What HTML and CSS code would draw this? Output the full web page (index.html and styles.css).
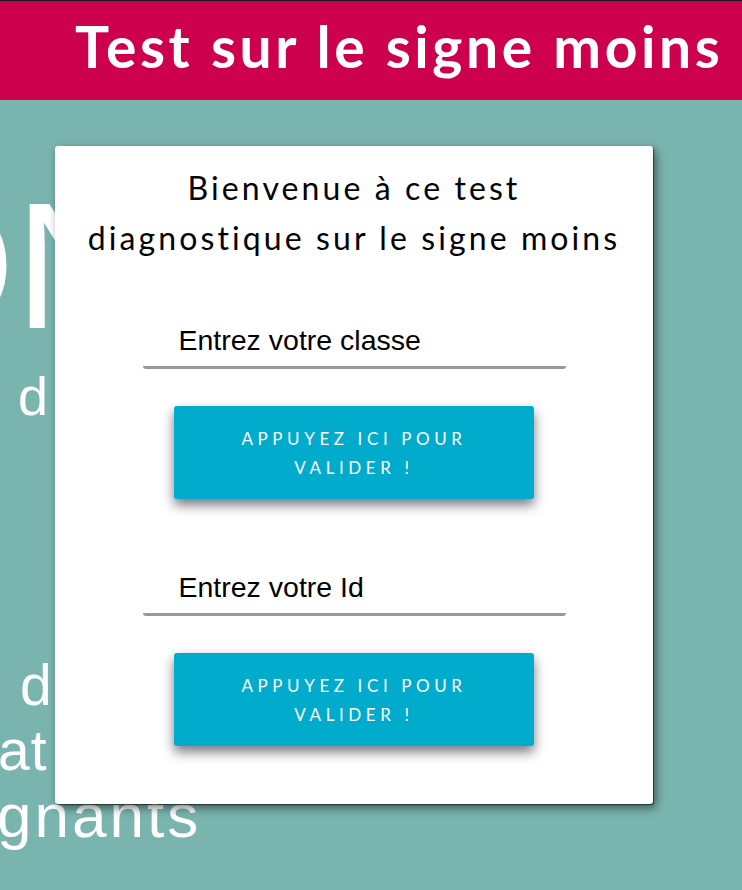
FILE: index.html
```html
<!DOCTYPE html>
<html lang="fr">
<head>
<meta charset="utf-8">
<title>Test sur le signe moins</title>
<link rel="stylesheet" href="styles.css">
</head>
<body>
<header class="topbar">
  <h1 class="topbar-title">Test sur le signe moins</h1>
</header>
<main class="stage">
  <div class="hero">
    <div class="hero-big">ON</div>
    <div class="hero-sub">d</div>
    <div class="hero-line hero-l1">d</div>
    <div class="hero-line hero-l2">at</div>
    <div class="hero-line hero-l3">gnants</div>
  </div>
  <section class="card">
    <h2 class="card-title">Bienvenue à ce test<br>diagnostique sur le signe moins</h2>
    <input class="field field-first" type="text" placeholder="Entrez votre classe">
    <button class="btn" type="button">Appuyez ici pour valider !</button>
    <input class="field field-second" type="text" placeholder="Entrez votre Id">
    <button class="btn" type="button">Appuyez ici pour valider !</button>
  </section>
</main>
</body>
</html>
```
FILE: styles.css
```css
html, body {
  margin: 0;
  padding: 0;
}
body {
  width: 742px;
  height: 890px;
  overflow: hidden;
  background: #7ab4af;
  font-family: "Lato", "Noto Sans", sans-serif;
}
.topbar {
  box-sizing: border-box;
  height: 100px;
  border-top: 1px solid #1a1a1a;
  background: #cc004c;
  padding: 11px 0 0 75px;
}
.topbar-title {
  margin: 0;
  color: #fff;
  font-family: "Lato", sans-serif;
  font-weight: 700;
  font-size: 57px;
  line-height: 68px;
  letter-spacing: 3.6px;
  white-space: nowrap;
}
.stage {
  position: relative;
  height: 790px;
  overflow: hidden;
  background: #7ab4af;
}
.hero {
  padding-top: 76px;
  color: #fff;
  font-family: "Liberation Sans", Arial, sans-serif;
  white-space: nowrap;
}
.hero-big {
  font-size: 180px;
  line-height: 180px;
  margin-left: -125px;
}
.hero-sub {
  font-size: 54px;
  line-height: 54px;
  margin: 13px 0 0 18px;
}
.hero-line {
  font-size: 57px;
  line-height: 65px;
  letter-spacing: 1px;
}
.hero-l1 { margin: 230px 0 0 20px; }
.hero-l2 { margin-left: -2px; }
.hero-l3 { margin-left: -3px; font-size: 62px; letter-spacing: 3px; }

.card {
  position: absolute;
  left: 55px;
  top: 46px;
  box-sizing: border-box;
  width: 598px;
  height: 658px;
  padding-top: 17px;
  background: #fff;
  border-radius: 3px;
  box-shadow: 1px 1px 1px rgba(0,0,0,0.5), 3px 4px 10px rgba(0,0,0,0.5);
  display: flex;
  flex-direction: column;
  align-items: center;
}
.card-title {
  margin: 0;
  font-family: "Lato", "Noto Sans", sans-serif;
  font-weight: 400;
  font-size: 32px;
  line-height: 50px;
  letter-spacing: 3.1px;
  text-align: center;
  color: #000;
}
.field {
  box-sizing: border-box;
  width: 423px;
  height: 55px;
  margin: 0;
  padding: 0 0 0 36px;
  border: none;
  border-bottom: 3px solid #999;
  border-radius: 3px;
  background: transparent;
  outline: none;
  font-family: "Liberation Sans", Arial, sans-serif;
  font-size: 28.5px;
  color: #000;
}
.field::placeholder {
  color: #000;
  opacity: 1;
}
.field-first { margin-top: 51px; }
.field-second { margin-top: 62px; }
.btn {
  box-sizing: border-box;
  width: 360px;
  height: 93px;
  margin-top: 37px;
  padding: 0 36px;
  border: none;
  border-radius: 3px;
  background: #00abcc;
  color: #fff;
  font-family: "Lato", "Noto Sans", sans-serif;
  font-size: 17px;
  line-height: 29px;
  letter-spacing: 4.6px;
  text-transform: uppercase;
  text-align: center;
  box-shadow: 0 6px 12px rgba(30,30,50,0.6);
  cursor: pointer;
}
```
